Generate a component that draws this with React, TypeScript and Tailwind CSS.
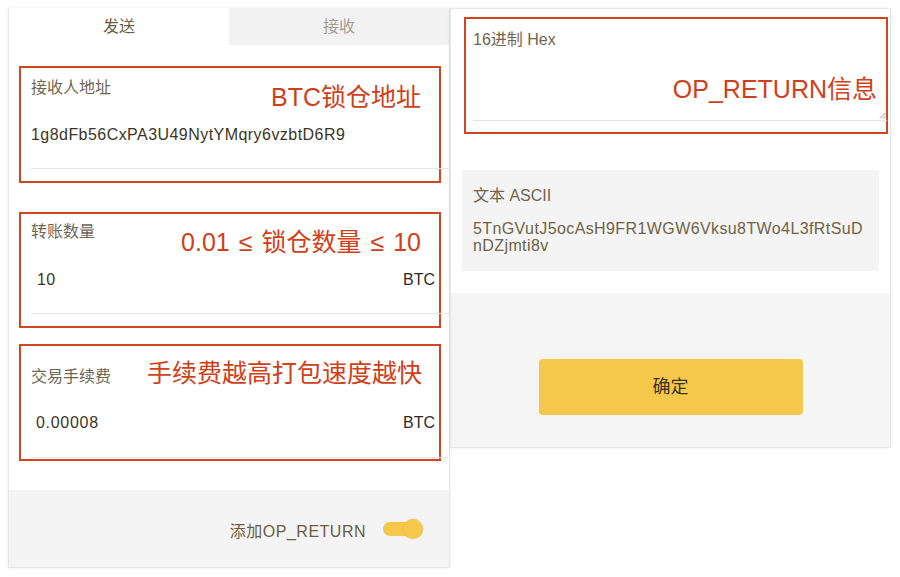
import React from "react";

const RED = "border-[#d2461f]";

function Field({
  label,
  value,
  unit,
  note,
  boxClass,
  labelMt,
  valueMt,
  lineMt,
  noteTop,
  noteRight,
  valuePl,
  valueTrack,
}: {
  label: string;
  value: string;
  unit?: string;
  note: React.ReactNode;
  boxClass: string;
  labelMt: string;
  valueMt: string;
  lineMt: string;
  noteTop: string;
  noteRight: string;
  valuePl: string;
  valueTrack: string;
}) {
  return (
    <div className={`relative ml-[10px] mr-[8px] border-2 ${RED} flex flex-col pl-[10px] ${boxClass}`}>
      <div className={`${labelMt} text-[16px] leading-[22px] text-[#6f6550]`}>{label}</div>
      <div className={`${valueMt} ${valuePl} pr-[4px] flex items-center justify-between text-[16px] leading-[22px] text-[#3c3526]`}>
        <span className={valueTrack}>{value}</span>
        {unit ? <span className="text-[#2e2a22]">{unit}</span> : null}
      </div>
      <div className={`${lineMt} h-px bg-[#e6e6e6] -mr-[11px]`} />
      <div className={`absolute ${noteTop} ${noteRight} text-[25px] leading-[30px] text-[#cf4019]`}>{note}</div>
    </div>
  );
}

export default function App() {
  return (
    <div className="w-[900px] h-[577px] bg-white flex items-start pt-[8px] pl-[8px] font-['Liberation_Sans','Noto_Sans_CJK_SC',sans-serif]">
      {/* Left card */}
      <div className="w-[442px] h-[560px] bg-white border border-[#e6e6e6] shadow-[0_0_4px_rgba(0,0,0,0.07)] flex flex-col">
        <div className="flex h-[37px] -mt-px">
          <div className="flex-1 flex items-center justify-center text-[16px] text-[#6a5d44] bg-white">发送</div>
          <div className="flex-1 flex items-center justify-center text-[16px] text-[#a39d92] bg-[#f2f2f2]">接收</div>
        </div>

        <div className="mt-[21px]">
          <Field
            label="接收人地址"
            value="1g8dFb56CxPA3U49NytYMqry6vzbtD6R9"
            note="BTC锁仓地址"
            boxClass="h-[117px]"
            labelMt="mt-[9px]"
            valueMt="mt-[25px]"
            lineMt="mt-[22px]"
            noteTop="top-[14px]"
            noteRight="right-[18px]"
            valuePl="pl-0"
            valueTrack="tracking-[0.45px]"
          />
        </div>
        <div className="mt-[29px]">
          <Field
            label="转账数量"
            value="10"
            unit="BTC"
            note={
              <span>
                0.01<span className="mx-[9px]">≤</span>锁仓数量<span className="mx-[9px]">≤</span>10
              </span>
            }
            boxClass="h-[116px]"
            labelMt="mt-[7px]"
            valueMt="mt-[26px]"
            lineMt="mt-[22px]"
            noteTop="top-[13px]"
            noteRight="right-[18px]"
            valuePl="pl-[6px]"
            valueTrack="tracking-[0.3px]"
          />
        </div>
        <div className="mt-[16px]">
          <Field
            label="交易手续费"
            value="0.00008"
            unit="BTC"
            note="手续费越高打包速度越快"
            boxClass="h-[117px]"
            labelMt="mt-[20px]"
            valueMt="mt-[24px]"
            lineMt="mt-[23px]"
            noteTop="top-[12px]"
            noteRight="right-[17px]"
            valuePl="pl-[5px]"
            valueTrack="tracking-[0.7px]"
          />
        </div>

        <div className="mt-[29px] flex-1 bg-[#f4f4f5] flex items-center justify-end pr-[26px] gap-[17px]">
          <span className="text-[16px] text-[#6a5d44] mt-[6px] tracking-[0.5px]">添加OP_RETURN</span>
          <div className="relative w-[40px] h-[20px]">
            <div className="absolute left-0 top-[3px] w-[34px] h-[14px] rounded-full bg-[#f5c84b]" />
            <div className="absolute right-0 top-0 w-[20px] h-[20px] rounded-full bg-[#f5c84b] shadow-[0_0_1px_rgba(220,120,100,0.6)]" />
          </div>
        </div>
      </div>

      {/* Right card */}
      <div className="w-[441px] h-[440px] bg-white border border-[#e6e6e6] shadow-[0_0_4px_rgba(0,0,0,0.07)] flex flex-col">
        <div className={`relative mt-[8px] ml-[13px] mr-[2px] h-[117px] border-2 ${RED} flex flex-col pl-[7px]`}>
          <div className="mt-[10px] text-[16px] leading-[22px] text-[#6f6550]">16进制 Hex</div>
          <div className="flex-1" />
          <div className="relative h-px bg-[#e4e4e4] mb-[11px] mr-[-1px]">
            <svg className="absolute right-[1px] -top-[8px]" width="7" height="7" viewBox="0 0 7 7">
              <path d="M6.5 1 L1 6.5 M6.5 4 L4 6.5" stroke="#9a9a9a" strokeWidth="1" fill="none" />
            </svg>
          </div>
          <div className="absolute top-[55px] right-[9px] text-[25px] leading-[30px] text-[#cf4019]">OP_RETURN信息</div>
        </div>

        <div className="mt-[36px] ml-[11px] w-[417px] bg-[#f4f4f4] pt-[15px] pb-[17px] px-[11px]">
          <div className="text-[16px] leading-[22px] text-[#6f6550]">文本 ASCII</div>
          <div className="mt-[13px] text-[16px] leading-[17px] text-[#6f6346] tracking-[0.4px]">
            <div>5TnGVutJ5ocAsH9FR1WGW6Vksu8TWo4L3fRtSuD</div>
            <div>nDZjmti8v</div>
          </div>
        </div>

        <div className="mt-[22px] flex-1 bg-[#f5f5f6] flex flex-col items-center">
          <button className="mt-[66px] w-[264px] h-[56px] rounded-[4px] bg-[#f5c84b] text-[18px] text-[#3b3424]">确定</button>
        </div>
      </div>
    </div>
  );
}
